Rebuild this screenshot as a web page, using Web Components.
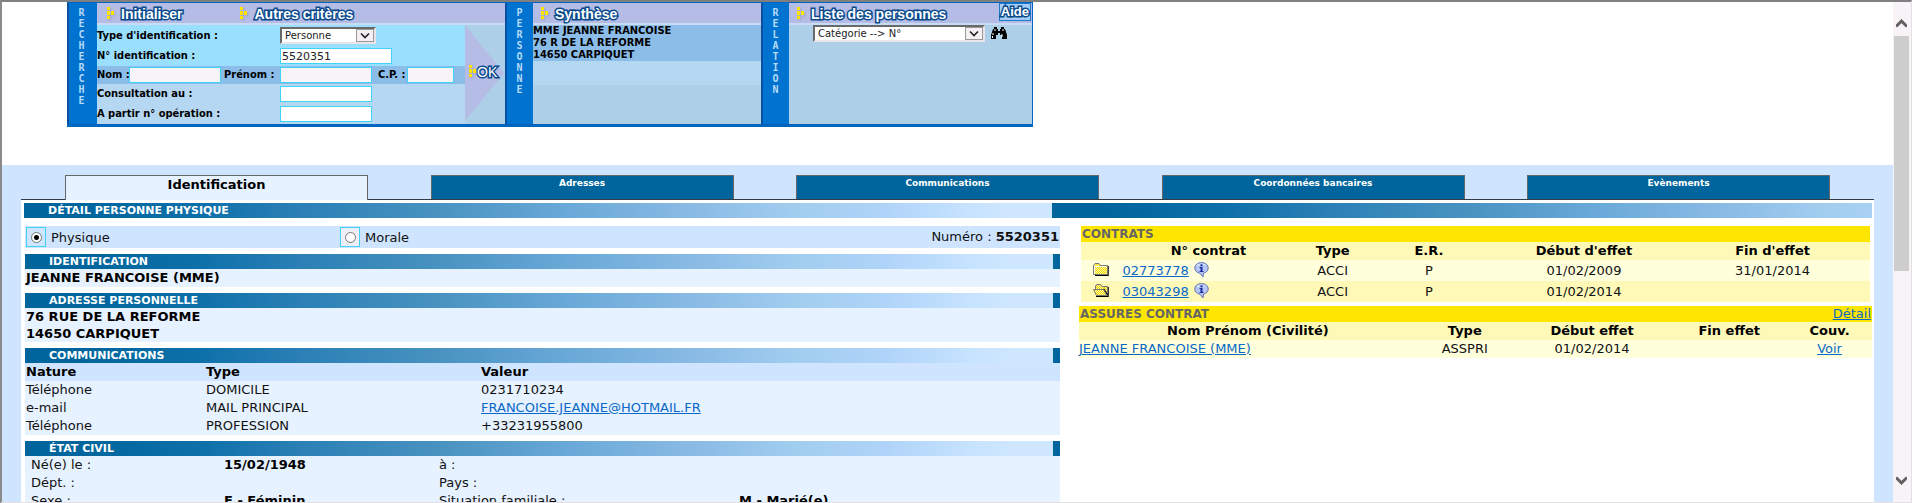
<!DOCTYPE html>
<html lang="fr">
<head>
<meta charset="utf-8">
<title>Personne - Identification</title>
<style>
html, body { margin: 0; height: 100%; }
body { font: 13px/18px "DejaVu Sans", Verdana, sans-serif; color: #111; background: #fff; overflow: hidden; }
</style>
</head>
<body>
<app-frame>
  <person-toolbar></person-toolbar>
  <person-sheet></person-sheet>
</app-frame>

<script>
const define = (name, html) => {
  const template = document.createElement('template');
  template.innerHTML = html;
  customElements.define(name, class extends HTMLElement {
    constructor() {
      super();
      this.attachShadow({ mode: 'open' }).append(template.content.cloneNode(true));
    }
  });
};

/* Window frame with its scroll bar */
define('app-frame', `
<style>
:host { display: flex; box-sizing: border-box; height: 100vh; border-style: solid; border-width: 2px 1px 1px 2px; border-color: #808080 #e3e0e4 #e3e0e4 #8a8a8a; overflow: hidden; }
main { flex: 1; min-width: 0; overflow: hidden; display: flex; flex-direction: column; }
</style>
<main><slot></slot></main>
<scroll-rail></scroll-rail>`);

define('scroll-rail', `
<style>
:host { display: flex; flex-direction: column; justify-content: space-between; width: 18px; background: #f7f3f7; }
svg { display: block; }
.thumb { height: 235px; margin: 0 2px 0 1px; background: #cdcdcd; }
.up { padding: 16px 3px 8px; }
.space { flex: 1; }
.down { padding: 8px 3px 16px; }
path { fill: none; stroke: #606060; stroke-width: 3; }
</style>
<svg class="up" width="11" height="10" viewBox="0 0 11 10"><path d="M0 8.5 5.5 3 11 8.5"/></svg>
<div class="thumb"></div><div class="space"></div>
<svg class="down" width="11" height="10" viewBox="0 0 11 10"><path d="M0 1.5 5.5 7 11 1.5"/></svg>`);

/* Yellow marker followed by an outlined title */
define('tool-title', `
<style>
:host { display: inline-flex; }
button { display: inline-flex; align-items: center; gap: 7px; padding: 0; border: 0; background: none; font: bold 14px/18px "Liberation Sans", Arial, sans-serif; color: #fff; -webkit-text-stroke: 3px #0a4a8c; paint-order: stroke fill; white-space: nowrap; cursor: pointer; }
:host([tight]) button { gap: 1px; font-weight: normal; }
svg { display: block; filter: drop-shadow(1px 1px 1px #9aa0c0); }
span { padding-top: 2px; }
</style>
<button type="button"><svg width="7" height="12" viewBox="0 0 7 12"><path fill="#ffe400" d="M0 0h3v3H0zM0 4h3v4H0zM0 9h3v3H0zM4 4h3v4H4z"/></svg><span><slot></slot></span></button>`);

/* Blue strip with upright stacked letters */
define('side-label', `
<style>
:host { display: block; box-sizing: border-box; width: 28px; padding: 4px 0 0; background: #0072d0; border-left: 2px solid #0a50a0; color: #b4daf8; }
span { display: block; width: 24px; writing-mode: vertical-rl; text-orientation: upright; font: bold 10px/24px "DejaVu Sans Mono", monospace; }
:host([wide]) { width: 30px; }
</style>
<span><slot></slot></span>`);

/* Column with a lavender heading above its content */
define('tool-panel', `
<style>
:host { display: flex; flex-direction: column; background: #aecfe8; }
header { display: flex; align-items: center; justify-content: space-between; box-sizing: border-box; height: 22px; background: #b5bce6; border-bottom: 2px solid #c9dcf5; }
.body { flex: 1; display: flex; flex-direction: column; }
</style>
<header><slot name="head"></slot></header>
<div class="body"><slot></slot></div>`);

const selectCss = `
.pick { position: relative; display: inline-flex; justify-self: start; }
select { appearance: none; box-sizing: border-box; height: 17px; margin: 0; padding: 0 20px 0 3px; border: 2px solid; border-color: #696969 #e8e4e8 #e8e4e8 #696969; border-radius: 0; background: #fff; color: #222; font: 10px/13px "DejaVu Sans", Verdana, sans-serif; }
.pick svg { position: absolute; right: 2px; top: 2px; pointer-events: none; }
`;
const arrow = `<svg width="18" height="13" viewBox="0 0 18 13"><rect x=".5" y=".5" width="17" height="12" fill="#f4f0f4" stroke="#999"/><path d="M5 4.5 9 8.5l4-4" fill="none" stroke="#222" stroke-width="1.6"/></svg>`;

define('search-form', `
<style>
:host { display: flex; flex: 1; }
form { width: 368px; display: grid; grid-template-rows: 21px 20px 18px 20px 20px; background: linear-gradient(#9bdfff 41px, #8bbde8 41px 59px, #b5d7f2 59px); }
.row { display: grid; grid-template-columns: 183px 1fr; align-items: center; }
.row3 { display: grid; grid-template-columns: 32px 95px 56px 98px 29px 47px; align-items: center; }
label { font: bold 11px/16px "DejaVu Sans Condensed", Tahoma, sans-serif; font-stretch: condensed; color: #000; white-space: nowrap; }
input { box-sizing: border-box; height: 16px; width: 92px; margin: 0; padding: 0 1px; border: 1px solid #3fd3f8; background: #fff; font: 10px/14px "DejaVu Sans", Verdana, sans-serif; color: #222; }
.off { background: #f7f3f7; }
.id { width: 112px; font-size: 11px; }
.cp { width: 47px; }
.pick select { width: 96px; }
.ok { position: relative; width: 40px; display: flex; align-items: center; background: #aecfe8; }
.ok svg { position: absolute; left: 0; top: 0; }
.ok tool-title { position: relative; margin: 0 0 8px 4px; }
${selectCss}
</style>
<form>
  <div class="row"><label for="t">Type d'identification :</label><span class="pick"><select id="t"><option>Personne</option></select>${arrow}</span></div>
  <div class="row"><label for="i">N° identification :</label><input id="i" class="id" value="5520351"></div>
  <div class="row3"><label for="n">Nom :</label><input id="n" class="off"><label for="p">Prénom :</label><input id="p" class="off"><label for="c">C.P. :</label><input id="c" class="off cp"></div>
  <div class="row"><label for="d">Consultation au :</label><input id="d"></div>
  <div class="row"><label for="o">A partir n° opération :</label><input id="o"></div>
</form>
<div class="ok"><svg width="40" height="98" viewBox="0 0 40 98"><path d="M0 0 39 48 0 96z" fill="#b5bce6"/></svg><tool-title tight>OK</tool-title></div>`);

define('person-toolbar', `
<style>
:host { display: block; padding: 0 0 38px 65px; }
.bar { display: grid; grid-template-columns: 30px 408px 28px 228px 28px 243px; width: max-content; border: solid #0066c0; border-width: 1px 1px 3px 0; }
.actions { display: flex; gap: 58px; margin-left: 10px; }
.start { margin-left: 8px; }
.who { height: 36px; background: #8bbde8; font: bold 11px/12px "DejaVu Sans Condensed", Tahoma, sans-serif; font-stretch: condensed; color: #000; white-space: pre; }
.more { height: 24px; background: #b5d8f2; }
.find { display: flex; align-items: flex-start; gap: 6px; padding: 0 0 0 24px; }
.find select { width: 172px; }
.glass { padding: 2px 0 0; border: 0; background: none; line-height: 0; }
.help { height: 18px; box-sizing: border-box; margin: 0 1px 2px 0; padding: 0 1px; background: #a3cdf5; border: 1px solid #1c78c8; font: bold 13px/16px "Liberation Sans", Arial, sans-serif; color: #fff; text-decoration: none; -webkit-text-stroke: 3px #0a4a8c; paint-order: stroke fill; }
${selectCss}
</style>
<div class="bar">
  <side-label wide>RECHERCHE</side-label>
  <tool-panel>
    <div class="actions" slot="head"><tool-title>Initialiser</tool-title><tool-title>Autres critères</tool-title></div>
    <search-form></search-form>
  </tool-panel>
  <side-label>PERSONNE</side-label>
  <tool-panel>
    <tool-title class="start" slot="head">Synthèse</tool-title>
    <div class="who">MME JEANNE FRANCOISE
76 R DE LA REFORME
14650 CARPIQUET</div>
    <div class="more"></div>
  </tool-panel>
  <side-label>RELATION</side-label>
  <tool-panel>
    <tool-title class="start" slot="head">Liste des personnes</tool-title>
    <a class="help" slot="head" href="#aide">Aide</a>
    <div class="find">
      <span class="pick"><select aria-label="Catégorie"><option>Catégorie --&gt; N°</option></select>${arrow}</span>
      <button class="glass" type="button" aria-label="Rechercher"><svg width="16" height="12" viewBox="0 0 16 12"><path d="M3 0h3v2h1v2h2V2h1V0h3v2h1l2 6v4h-5V8H9V6H7v2H5v4H0V8l2-6h1z"/><path d="M4 2v2M2 6v2M12 2v2M11 7v3M1.500 9v2" stroke="#fff" stroke-width="1"/></svg></button>
    </div>
  </tool-panel>
</div>`);

/* Gradient heading bar */
define('section-bar', `
<style>
:host { display: block; height: 15px; padding-left: 24px; overflow: hidden; font: bold 11px/16px "DejaVu Sans", Verdana, sans-serif; color: #fff;
  background: linear-gradient(90deg, #00659c 5%, #0e70a9 17%, #2b80b6 27%, #4892c0 40%, #6aa9d8 53%, #8cbce6 66%, #a1cdef 75%, #b0d4f9 84%, #c6e3ff 92%, #cfe6ff 96%) 0 0 / 1028px 100% repeat-x; }
</style>
<slot></slot>`);

define('tab-strip', `
<style>
:host { display: block; }
nav { display: flex; justify-content: space-between; padding: 0 44px; border-bottom: 1px solid #333c44; }
a { box-sizing: border-box; width: 303px; flex: 0 1 303px; height: 24px; border: 1px solid #666; border-bottom: 0; background: #00659c; color: #fff; font: bold 9px/14px "DejaVu Sans", Verdana, sans-serif; text-align: center; text-decoration: none; white-space: nowrap; }
a[aria-current] { height: 25px; margin-bottom: -1px; background: #e6f2ff; color: #000; font-size: 13px; line-height: 18px; }
</style>
<nav><a href="#id" aria-current="page">Identification</a><a href="#ad">Adresses</a><a href="#co">Communications</a><a href="#ba">Coordonnées bancaires</a><a href="#ev">Evènements</a></nav>`);

define('person-details', `
<style>
:host { display: flex; flex-direction: column; gap: 6px; }
.kind { display: grid; grid-template-columns: 314px 1fr auto; align-items: center; height: 22px; padding: 0 1px; background: #cfe5ff; }
label { display: flex; align-items: center; gap: 5px; }
.box { display: flex; align-items: center; justify-content: center; box-sizing: border-box; width: 20px; height: 20px; border: 1px solid #3fd3f8; }
.box.off { background: #f0eef8; }
.caption { padding-top: 2px; }
input { appearance: none; box-sizing: border-box; width: 11px; height: 11px; margin: 0; border: 1px solid #777; border-radius: 50%; background: #fff; }
input:checked { background: radial-gradient(circle, #000 0 2px, #fff 3px); }
.text { background: #e6f2ff; padding-left: 1px; font: bold 13px/17px "DejaVu Sans", Verdana, sans-serif; color: #000; }
.name { line-height: 18px; }
table { width: 100%; border-collapse: collapse; table-layout: fixed; background: #e6f2ff; }
td, th { height: 18px; padding: 0 0 0 1px; text-align: left; white-space: nowrap; line-height: 18px; }
th { color: #000; }
thead { background: #cfe5ff; }
.civil td, .civil th { padding-left: 6px; }
a { color: #0a68c8; }
</style>
<div class="kind">
  <label><span class="box"><input type="radio" name="k" checked></span><span class="caption">Physique</span></label>
  <label><span class="box off"><input type="radio" name="k"></span><span class="caption">Morale</span></label>
  <span>Numéro : <b>5520351</b></span>
</div>
<section><section-bar>IDENTIFICATION</section-bar><div class="text name">JEANNE FRANCOISE (MME)</div></section>
<section><section-bar>ADRESSE PERSONNELLE</section-bar><div class="text">76 RUE DE LA REFORME<br>14650 CARPIQUET</div></section>
<section><section-bar>COMMUNICATIONS</section-bar>
<table><colgroup><col style="width:180px"><col style="width:275px"><col></colgroup>
<thead><tr><th>Nature</th><th>Type</th><th>Valeur</th></tr></thead>
<tbody><tr><td>Téléphone</td><td>DOMICILE</td><td>0231710234</td></tr>
<tr><td>e-mail</td><td>MAIL PRINCIPAL</td><td><a href="#mail">FRANCOISE.JEANNE@HOTMAIL.FR</a></td></tr>
<tr><td>Téléphone</td><td>PROFESSION</td><td>+33231955800</td></tr></tbody></table></section>
<section><section-bar>ÉTAT CIVIL</section-bar>
<table class="civil"><colgroup><col style="width:193px"><col style="width:215px"><col style="width:300px"><col></colgroup>
<tr><td>Né(e) le :</td><th>15/02/1948</th><td>à :</td><th></th></tr>
<tr><td>Dépt. :</td><th></th><td>Pays :</td><th></th></tr>
<tr><td>Sexe :</td><th>F - Féminin</th><td>Situation familiale :</td><th>M - Marié(e)</th></tr></table></section>`);

const info = `<a class="info" href="#info" aria-label="Information"><svg width="15" height="16" viewBox="0 0 15 16"><path d="M7.500.6C11.500.6 14.200 3 14.200 6c0 2.600-2 4.600-4.700 5.200L9 15l-3-3.700C3 10.800.8 8.700.8 6 .8 3 3.500.6 7.500.6z" fill="#b5c6f8" stroke="#6472b0"/><path d="M3 3.500Q7 .8 11 3" fill="none" stroke="#e8eeff"/><path d="M6.500 2.200h2v2h-2zM5.500 5h3v4h1v1h-4V9h1V6h-1z" fill="#1c2c9c"/></svg></a>`;
const dots = `<defs><pattern id="d" width="2" height="2" patternUnits="userSpaceOnUse"><rect width="2" height="2" fill="#fff6a0"/><path d="M0 0h1v1H0zM1 1h1v1H1z" fill="#f0d800"/></pattern></defs>`;
const closed = `<svg width="16" height="13" viewBox="0 0 16 13">${dots}<path d="M2 12.500h13V3" fill="none" stroke="#000" stroke-width="1.500"/><path d="M.5 11.500V2.500l1.500-2h4l1.500 2h7v9z" fill="url(#d)" stroke="#777"/><path d="M1.500 10.500V3.500h12" fill="none" stroke="#fff"/></svg>`;
const open = `<svg width="16" height="13" viewBox="0 0 16 13">${dots}<path d="M3 12.500h12V3" fill="none" stroke="#000" stroke-width="1.500"/><path d="M2.500 5V2l1-1.500h4l1.500 2h5.500v9z" fill="url(#d)" stroke="#777"/><path d="M10.500 5l4 6" stroke="#000" stroke-width="1.500"/><path d="M.5 5.500h10l3.500 6H3.500z" fill="url(#d)" stroke="#777"/></svg>`;

define('contract-lists', `
<style>
:host { display: flex; flex-direction: column; gap: 4px; }
.inset { padding: 0 2px; }
h2 { display: flex; justify-content: space-between; margin: 0; padding: 0 1px; background: #ffe600; color: #666; font: bold 12px/16px "DejaVu Sans", Verdana, sans-serif; }
h2 a { font-weight: normal; font-size: 13px; }
a { color: #0a68c8; }
table { width: 100%; border-collapse: collapse; table-layout: fixed; }
td, th { height: 18px; padding: 0; line-height: 18px; text-align: center; white-space: nowrap; }
th { color: #000; }
thead, .even { background: #fff9b8; }
.odd { background: #ffffdc; }
.inset td { height: 21px; line-height: 21px; }
.left { text-align: left; }
.inset .left { padding-left: 6px; }
svg { display: block; }
.folder { padding-left: 12px; }
.folder svg { margin-bottom: 2px; }
.num { display: flex; align-items: center; gap: 5px; height: 21px; }
.info { margin-top: -4px; }
.info svg { margin-top: 2px; }
</style>
<section class="inset"><h2><span>CONTRATS</span></h2>
<table><colgroup><col style="width:4.500%"><col style="width:23.300%"><col style="width:8.200%"><col style="width:16.200%"><col style="width:23.100%"><col></colgroup>
<thead><tr><th></th><th>N° contrat</th><th>Type</th><th>E.R.</th><th>Début d'effet</th><th>Fin d'effet</th></tr></thead>
<tbody><tr class="odd"><td class="folder">${closed}</td><td class="left"><span class="num"><a href="#c1">02773778</a>${info}</span></td><td>ACCI</td><td>P</td><td>01/02/2009</td><td>31/01/2014</td></tr>
<tr class="even"><td class="folder">${open}</td><td class="left"><span class="num"><a href="#c2">03043298</a>${info}</span></td><td>ACCI</td><td>P</td><td>01/02/2014</td><td></td></tr></tbody></table></section>
<section><h2><span>ASSURES CONTRAT</span><a href="#detail">Détail</a></h2>
<table><colgroup><col style="width:42.600%"><col style="width:12.100%"><col style="width:20%"><col style="width:14.600%"><col></colgroup>
<thead><tr><th>Nom Prénom (Civilité)</th><th>Type</th><th>Début effet</th><th>Fin effet</th><th>Couv.</th></tr></thead>
<tbody><tr class="odd"><td class="left"><a href="#p">JEANNE FRANCOISE (MME)</a></td><td>ASSPRI</td><td>01/02/2014</td><td></td><td><a href="#v">Voir</a></td></tr></tbody></table></section>`);

define('person-sheet', `
<style>
:host { display: block; flex: 1; padding: 10px 19px 0; background: #cfe5ff; }
.panel { min-height: 100vh; padding: 3px 2px 0 3px; background: #fff; }
.cols { display: grid; grid-template-columns: minmax(0, 1035fr) minmax(0, 793fr); column-gap: 19px; align-items: start; padding: 8px 0 0 1px; }
</style>
<tab-strip></tab-strip>
<div class="panel">
  <section-bar>DÉTAIL PERSONNE PHYSIQUE</section-bar>
  <div class="cols"><person-details></person-details><contract-lists></contract-lists></div>
</div>`);
</script>
</body>
</html>
